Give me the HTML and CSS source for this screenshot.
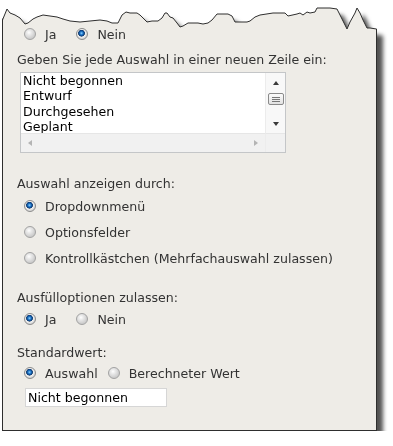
FILE: index.html
```html
<!DOCTYPE html>
<html lang="de">
<head>
    <meta charset="UTF-8">
    <title>Auswahl - Spalteneinstellungen</title>
    <link rel="stylesheet" href="styles.css">
</head>
<body>
    <div class="page">
        <div class="sheet">
            <div class="opts inline">
                <label class="opt"><input class="radio" type="radio" name="r0"><span>Ja</span></label>
                <label class="opt"><input class="radio" type="radio" name="r0" checked><span>Nein</span></label>
            </div>

            <p class="field-label first">Geben Sie jede Auswahl in einer neuen Zeile ein:</p>
            <div class="listbox">
                <div class="list-text">Nicht begonnen<br>Entwurf<br>Durchgesehen<br>Geplant</div>
                <div class="vscroll">
                    <span class="arr arr-up"></span>
                    <span class="thumb"><i></i><i></i><i></i></span>
                    <span class="arr arr-down"></span>
                </div>
                <div class="hscroll">
                    <span class="arr arr-left"></span>
                    <span class="arr arr-right"></span>
                </div>
                <div class="corner"></div>
            </div>

            <p class="field-label">Auswahl anzeigen durch:</p>
            <div class="opts stack">
                <label class="opt"><input class="radio" type="radio" name="r1" checked><span>Dropdownmenü</span></label>
                <label class="opt"><input class="radio" type="radio" name="r1"><span>Optionsfelder</span></label>
                <label class="opt"><input class="radio" type="radio" name="r1"><span>Kontrollkästchen (Mehrfachauswahl zulassen)</span></label>
            </div>

            <p class="field-label">Ausfülloptionen zulassen:</p>
            <div class="opts inline near">
                <label class="opt"><input class="radio" type="radio" name="r2" checked><span>Ja</span></label>
                <label class="opt"><input class="radio" type="radio" name="r2"><span>Nein</span></label>
            </div>

            <p class="field-label short">Standardwert:</p>
            <div class="opts inline tight">
                <label class="opt"><input class="radio" type="radio" name="r3" checked><span>Auswahl</span></label>
                <label class="opt"><input class="radio" type="radio" name="r3"><span>Berechneter Wert</span></label>
            </div>
            <input class="text-input" type="text" value="Nicht begonnen">
        </div>

        <!-- abgerissene Oberkante -->
        <svg class="tear" width="380" height="32" viewBox="0 0 380 32">
            <polyline fill="none" stroke="#2e2e2e" stroke-width="1" stroke-linejoin="round"
                points="2.5,32 2.5,20 7,9 10,13 15,15 20,18 25,24 28,23 33,19 37,17 43,15 50,16 57,17 63,19 70,21 80,22 90,21 100,20 107,21 112,23 118,23 122,15 126,12 130,13 137,13 140,15 143,18 147,22 152,21 158,21 162,18 165,13 167,13 170,17 173,18 177,23 180,27 183,26 188,23 198,23 203,24 208,23 212,20 217,14 228,14 232,16 235,22 247,22 250,21 255,17 260,15 273,13 285,13 288,16 297,14 300,13 303,15 307,12 310,13 315,12 317,8 330,8 337,9 340,15 345,25 347,29 350,22 355,13 357,8 360,13 363,20 367,28 370,28 376.5,29 376.5,32"/>
        </svg>
    </div>
</body>
</html>
```

FILE: styles.css
```css
body { margin: 0; background: #fff; font-family: "DejaVu Sans", Verdana, sans-serif; font-size: 12.6px; color: #333; }

.page { position: relative; width: 390px; filter: drop-shadow(6px 7px 2px rgba(0, 0, 0, 0.68)); }
.tear { position: absolute; top: 0; left: 0; }

.sheet {
    box-sizing: border-box;
    width: 375px;
    margin-left: 2px;
    padding: 25px 0 23px 14px;
    background: #eeece7;
    border: 1px solid #2e2e2e;
    border-top: none;
    clip-path: polygon(0 20px, 5px 9px, 8px 13px, 13px 15px, 18px 18px, 23px 24px, 26px 23px, 31px 19px, 35px 17px, 41px 15px, 48px 16px, 55px 17px, 61px 19px, 68px 21px, 78px 22px, 88px 21px, 98px 20px, 105px 21px, 110px 23px, 116px 23px, 120px 15px, 124px 12px, 128px 13px, 135px 13px, 138px 15px, 141px 18px, 145px 22px, 150px 21px, 156px 21px, 160px 18px, 163px 13px, 165px 13px, 168px 17px, 171px 18px, 175px 23px, 178px 27px, 181px 26px, 186px 23px, 196px 23px, 201px 24px, 206px 23px, 210px 20px, 215px 14px, 226px 14px, 230px 16px, 233px 22px, 245px 22px, 248px 21px, 253px 17px, 258px 15px, 271px 13px, 283px 13px, 286px 16px, 295px 14px, 298px 13px, 301px 15px, 305px 12px, 308px 13px, 313px 12px, 315px 8px, 328px 8px, 335px 9px, 338px 15px, 343px 25px, 345px 29px, 348px 22px, 353px 13px, 355px 8px, 358px 13px, 361px 20px, 365px 28px, 368px 28px, 375px 29px, 375px 100%, 0 100%);
}

.field-label { margin: 23px 0 0; line-height: 16px; }
.field-label.first { margin-top: 9px; }
.field-label.short { margin-top: 17px; }

.opts { display: flex; margin-left: 7px; }
.opts.inline { gap: 20px; }
.opts.inline.tight { gap: 10px; margin-top: 3px; }
.opts.near { margin-top: 4px; }
.opts.stack { flex-direction: column; gap: 8px; margin-top: 5px; }
.opt { display: inline-flex; align-items: center; gap: 9px; height: 18px; }

.radio {
    appearance: none;
    -webkit-appearance: none;
    width: 12px;
    height: 12px;
    margin: 0;
    border: 1px solid #a2a2a2;
    border-radius: 50%;
    box-sizing: border-box;
    background: radial-gradient(circle at 40% 35%, #ffffff 0, #ececec 2px, #cdcdcd 6px);
}
.radio:checked {
    border-color: #8c8c8c;
    background: radial-gradient(circle at 45% 42%, #8fd2ff 0, #1c74c6 1.6px, #0b3f82 2.8px, #2a4c70 3.2px, #f4f4f4 3.6px, #d0d0d0 6px);
}

/* Auswahlliste */
.listbox {
    display: grid;
    grid-template-columns: 1fr 20px;
    grid-template-rows: 60px 19px;
    width: 266px;
    margin: 4px 0 0 3px;
    box-sizing: border-box;
    border: 1px solid #c4c6c8;
    background: #fff;
}
.list-text { padding-left: 2px; line-height: 15.4px; color: #000; overflow: hidden; white-space: nowrap; }
.vscroll { display: flex; flex-direction: column; align-items: center; padding-top: 8px; background: #f8f8f8; border-left: 1px solid #ececec; }
.hscroll { display: flex; align-items: center; justify-content: space-between; padding: 0 7px; background: #f1f1f1; border-top: 1px solid #e6e6e6; }
.corner { background: #f1f1f1; border-top: 1px solid #e6e6e6; border-left: 1px solid #ececec; }

.arr { width: 0; height: 0; border: 3.5px solid transparent; }
.arr-up { border-top: none; border-bottom: 4px solid #3a3a3a; }
.arr-down { border-bottom: none; border-top: 4px solid #3a3a3a; margin-top: 17px; }
.arr-left { border-left: none; border-right: 4px solid #b4b4b4; }
.arr-right { border-right: none; border-left: 4px solid #b4b4b4; }

.thumb {
    display: flex; flex-direction: column; align-items: center; justify-content: center; gap: 1px;
    width: 16px; height: 12px; margin-top: 8px; box-sizing: border-box;
    border: 1px solid #8a8a8a; border-radius: 2px;
    background: linear-gradient(#fbfbfb, #e2e2e2);
}
.thumb i { display: block; width: 8px; height: 1px; background: #777; }

.text-input {
    display: block;
    width: 142px;
    height: 19px;
    margin: 6px 0 0 8px;
    padding: 0 2px;
    box-sizing: border-box;
    border: 1px solid #d6d6d6;
    background: #fff;
    font: inherit;
    color: #000;
}
```
